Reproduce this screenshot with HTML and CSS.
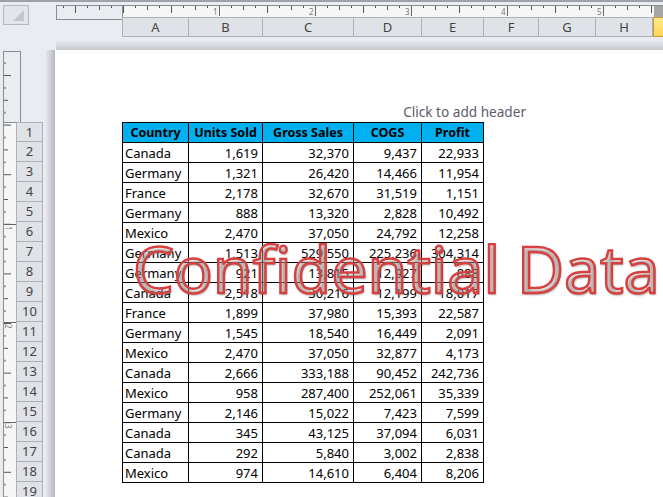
FILE: index.html
```html
<!DOCTYPE html>
<html lang="en">
<head>
<meta charset="utf-8">
<title>Page Layout</title>
<link rel="stylesheet" href="styles.css">
</head>
<body>
<div class="app">
  <div class="top">
    <div class="corner-col"><div class="corner"><svg width="24" height="18" viewBox="0 0 24 18"><path d="M9 15 L20 4 V15 Z" fill="#c4c8cc"/></svg></div></div>
    <div class="top-main">
      <svg class="hruler" width="607" height="16" viewBox="0 0 607 16">
        <defs>
          <pattern id="ht" x="0" y="0" width="48" height="16" patternUnits="userSpaceOnUse">
            <rect x="19" y="1" width="1" height="7" fill="#555"/>
            <rect x="7" y="1" width="1" height="2" fill="#555"/>
            <rect x="31" y="1" width="1" height="2" fill="#555"/>
            <rect x="43" y="1" width="1" height="4" fill="#555"/>
          </pattern>
        </defs>
        <rect x="0.5" y="0.5" width="66" height="14" fill="#e9ecf0" stroke="#8a8d91"/>
        <rect x="67" y="0" width="540" height="12" fill="#f6f6f6"/>
        <rect x="67" y="0" width="540" height="1" fill="#8a8d91"/>
        <rect x="0" y="0" width="598" height="12" fill="url(#ht)"/>
        <rect x="598" y="1" width="9" height="11" fill="#a6a6a6"/>
        <path d="M163.500 1v10M259.500 1v10M355.500 1v10M451.500 1v10M547.500 1v10" stroke="#666"/>
        <text class="rnum" x="157" y="10">1</text>
        <text class="rnum" x="253" y="10">2</text>
        <text class="rnum" x="349" y="10">3</text>
        <text class="rnum" x="445" y="10">4</text>
        <text class="rnum" x="541" y="10">5</text>
      </svg>
      <div class="cols">
        <div class="col a">A</div><div class="col b">B</div><div class="col c">C</div><div class="col d">D</div><div class="col e">E</div><div class="col f">F</div><div class="col g">G</div><div class="col h">H</div><div class="col more"></div>
      </div>
    </div>
  </div>
  <div class="main">
    <div class="side">
      <svg class="vruler" width="18" height="446" viewBox="0 0 18 446">
        <defs>
          <pattern id="vt" x="0" y="24" width="18" height="49.6" patternUnits="userSpaceOnUse">
            <rect x="1" y="0" width="7" height="1" fill="#555"/>
            <rect x="1" y="12.400" width="2" height="1" fill="#555"/>
            <rect x="1" y="24.800" width="4" height="1" fill="#555"/>
            <rect x="1" y="37.200" width="2" height="1" fill="#555"/>
          </pattern>
        </defs>
        <rect x="0.5" y="0.5" width="17" height="71" fill="#e9ecf0" stroke="#8a8d91"/>
        <rect x="1" y="72" width="12" height="374" fill="#f6f6f6"/>
        <rect x="0" y="72" width="1" height="374" fill="#8a8d91"/>
        <rect x="1" y="1" width="12" height="445" fill="url(#vt)"/>
        <path d="M1 173.500h12M1 271.500h12M1 371.500h12" stroke="#666"/>
        <text class="rnum" transform="translate(2 175) rotate(90)">1</text>
        <text class="rnum" transform="translate(2 273) rotate(90)">2</text>
        <text class="rnum" transform="translate(2 373) rotate(90)">3</text>
      </svg>
      <div class="rows">
        <div class="rh">1</div><div class="rh">2</div><div class="rh">3</div><div class="rh">4</div><div class="rh">5</div><div class="rh">6</div><div class="rh">7</div><div class="rh">8</div><div class="rh">9</div><div class="rh">10</div><div class="rh">11</div><div class="rh">12</div><div class="rh">13</div><div class="rh">14</div><div class="rh">15</div><div class="rh">16</div><div class="rh">17</div><div class="rh">18</div><div class="rh">19</div>
      </div>
    </div>
    <div class="page">
      <div class="header-hint">Click to add header</div>
      <table class="sheet">
        <colgroup><col class="w1"><col class="w2"><col class="w3"><col class="w4"><col class="w5"></colgroup>
        <thead><tr><th>Country</th><th>Units Sold</th><th>Gross Sales</th><th>COGS</th><th>Profit</th></tr></thead>
        <tbody>
          <tr><td>Canada</td><td>1,619</td><td>32,370</td><td>9,437</td><td>22,933</td></tr>
          <tr><td>Germany</td><td>1,321</td><td>26,420</td><td>14,466</td><td>11,954</td></tr>
          <tr><td>France</td><td>2,178</td><td>32,670</td><td>31,519</td><td>1,151</td></tr>
          <tr><td>Germany</td><td>888</td><td>13,320</td><td>2,828</td><td>10,492</td></tr>
          <tr><td>Mexico</td><td>2,470</td><td>37,050</td><td>24,792</td><td>12,258</td></tr>
          <tr><td>Germany</td><td>1,513</td><td>529,550</td><td>225,236</td><td>304,314</td></tr>
          <tr><td>Germany</td><td>921</td><td>13,815</td><td>12,927</td><td>888</td></tr>
          <tr><td>Canada</td><td>2,518</td><td>30,216</td><td>12,199</td><td>18,017</td></tr>
          <tr><td>France</td><td>1,899</td><td>37,980</td><td>15,393</td><td>22,587</td></tr>
          <tr><td>Germany</td><td>1,545</td><td>18,540</td><td>16,449</td><td>2,091</td></tr>
          <tr><td>Mexico</td><td>2,470</td><td>37,050</td><td>32,877</td><td>4,173</td></tr>
          <tr><td>Canada</td><td>2,666</td><td>333,188</td><td>90,452</td><td>242,736</td></tr>
          <tr><td>Mexico</td><td>958</td><td>287,400</td><td>252,061</td><td>35,339</td></tr>
          <tr><td>Germany</td><td>2,146</td><td>15,022</td><td>7,423</td><td>7,599</td></tr>
          <tr><td>Canada</td><td>345</td><td>43,125</td><td>37,094</td><td>6,031</td></tr>
          <tr><td>Canada</td><td>292</td><td>5,840</td><td>3,002</td><td>2,838</td></tr>
          <tr><td>Mexico</td><td>974</td><td>14,610</td><td>6,404</td><td>8,206</td></tr>
        </tbody>
      </table>
      <div class="watermark">Confidential Data</div>
    </div>
  </div>
</div>
</body>
</html>
```

FILE: styles.css
```css
html, body { margin: 0; padding: 0; }
body { width: 663px; height: 497px; overflow: hidden; background: #e9ecf0; font-family: "Noto Sans", "Open Sans", sans-serif; color: #000; }
.app { width: 663px; height: 497px; display: flex; flex-direction: column; overflow: hidden; border-top: 2px solid #9ea2a8; box-sizing: border-box; }
.top { display: flex; height: 48px; flex: none; }
.corner-col { width: 56px; flex: none; padding: 3px 0 0 3px; box-sizing: border-box; }
.corner { width: 24px; height: 18px; border: 1px solid #b5b8bc; background: #e2e5e9; display: flex; }
.top-main { flex: 1; min-width: 0; padding-top: 3px; display: flex; flex-direction: column; background: linear-gradient(#e9ecf0 calc(100% - 10px), #c6c9cd 100%); }
.hruler { display: block; flex: none; }
.cols { display: flex; height: 20px; margin: -4px 0 0 66px; }
.col { box-sizing: border-box; flex: none; background: #dfe2e7; border-right: 1px solid #aeb1b5; border-top: 1px solid #aeb1b5; border-bottom: 1px solid #aeb1b5; text-align: center; font-size: 13px; line-height: 19px; color: #444; }
.col.a { width: 67px; border-left: 1px solid #aeb1b5; }
.col.b { width: 74px; }
.col.c { width: 91px; }
.col.d { width: 68px; }
.col.e { width: 62px; }
.col.f { width: 55px; }
.col.g { width: 57px; }
.col.h { width: 57px; }
.col.more { width: 12px; background: linear-gradient(#ffe98a, #ffd65a); border: 1px solid #c49a3c; }
.main { flex: 1; display: flex; min-height: 0; }
.side { width: 55px; flex: none; position: relative; padding: 1px 0 0 3px; box-sizing: border-box; background: linear-gradient(90deg, #e9ecf0 82%, #b4b7bb 100%); }
.vruler { display: block; }
.rows { position: absolute; left: 16px; top: 72px; width: 27px; }
.rh { box-sizing: border-box; width: 27px; height: 20px; background: #dfe2e7; border: 1px solid #aeb1b5; border-top: 0; text-align: center; font-size: 13px; line-height: 19px; color: #444; }
.rh:first-child { border-top: 1px solid #aeb1b5; }
.rnum { font-family: "Noto Sans", sans-serif; font-size: 8px; fill: #777; }
.page { flex: 1; min-width: 0; background: #fff; position: relative; padding-top: 52px; }
.header-hint { text-align: right; margin-right: 137px; height: 20px; font-size: 13.6px; line-height: 20px; color: #5c5c6c; }
.sheet { border-collapse: collapse; table-layout: fixed; width: 362px; margin: 0 0 0 67px; font-size: 13px; }
.w1 { width: 66px; } .w2 { width: 74px; } .w3 { width: 91px; } .w4 { width: 68px; } .w5 { width: 62px; }
.sheet th, .sheet td { border: 1px solid #000; height: 20px; padding: 0 4px 0 2px; line-height: 18px; text-align: right; box-sizing: border-box; white-space: nowrap; }
.sheet th { background: #00b0f0; text-align: center; font-weight: 700; font-size: 12.5px; padding: 0; }
.sheet td:first-child { text-align: left; }
.watermark { position: absolute; left: 78px; top: 178px; font-size: 64.5px; line-height: 80px; white-space: nowrap; color: rgba(255,255,255,.2); -webkit-text-stroke: 2.5px #d6413f; text-shadow: 1px 2px 2px rgba(80,80,80,.5); }
```
